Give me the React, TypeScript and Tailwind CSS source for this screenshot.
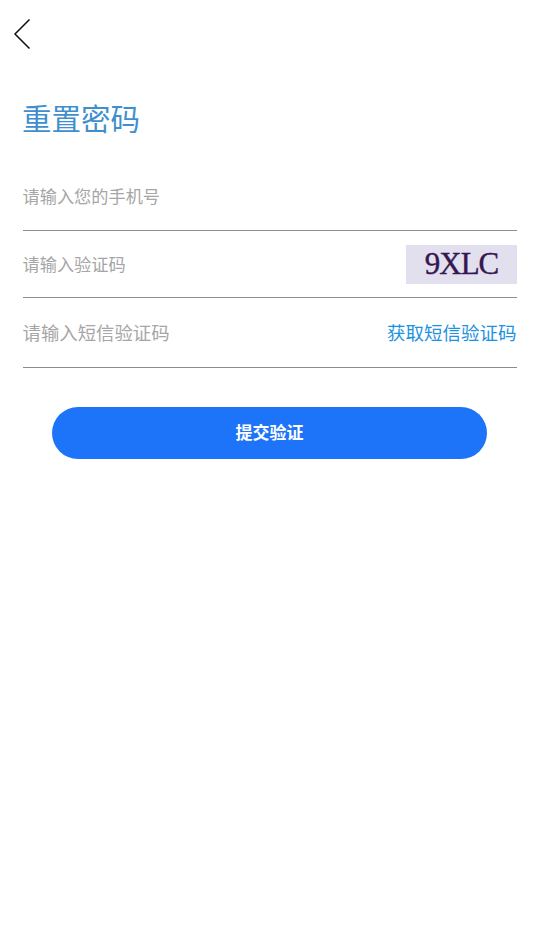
const cjk = { fontFamily: '"Noto Sans CJK SC", "Noto Sans", sans-serif' };

export default function App() {
  return (
    <div className="min-h-[948px] w-full bg-white" style={cjk}>
      <div className="h-[68px] pl-[13px] pt-[19px]">
        <svg width="18" height="30" viewBox="0 0 18 30" fill="none" stroke="#111" strokeWidth="1.5">
          <path d="M16.5 0.5 L2 15 L16.5 29.5" />
        </svg>
      </div>

      <div className="px-[23px] pr-[26px]">
        <h1 className="-ml-[1px] mt-[29px] h-[40px] text-[29.5px] leading-[40px] text-[#3f8fcf]">重置密码</h1>

        <div className="mt-[36px] flex h-[58px] items-start border-b border-[#8c8c8c]">
          <span className="-ml-[0.5px] mt-[11px] text-[17.2px] leading-[24px] text-[#a6a6a6]">请输入您的手机号</span>
        </div>

        <div className="flex h-[67px] items-center justify-between border-b border-[#8c8c8c]">
          <span className="-ml-[0.5px] text-[17.2px] leading-[24px] text-[#a6a6a6]">请输入验证码</span>
          <div
            className="flex h-[39px] w-[111px] items-center justify-center bg-[#e2e0ef] pb-[1px] text-[31px] leading-none tracking-[-1px] text-[#35174f] [-webkit-text-stroke:0.4px_#35174f]"
            style={{ fontFamily: '"Liberation Serif", serif' }}
          >
            9XLC
          </div>
        </div>

        <div className="flex h-[70px] items-center justify-between border-b border-[#8c8c8c]">
          <span className="-ml-[0.5px] mb-[2px] text-[18.4px] leading-[24px] text-[#a6a6a6]">请输入短信验证码</span>
          <span className="mb-[2px] mr-[0.5px] text-[18.5px] leading-[24px] text-[#1c92e0]">获取短信验证码</span>
        </div>

        <button className="mx-[29px] mt-[39px] flex h-[52px] w-[435px] items-center justify-center rounded-full bg-[#1e74f8] pb-[2px] text-[17px] font-bold text-white">
          提交验证
        </button>
      </div>
    </div>
  );
}
